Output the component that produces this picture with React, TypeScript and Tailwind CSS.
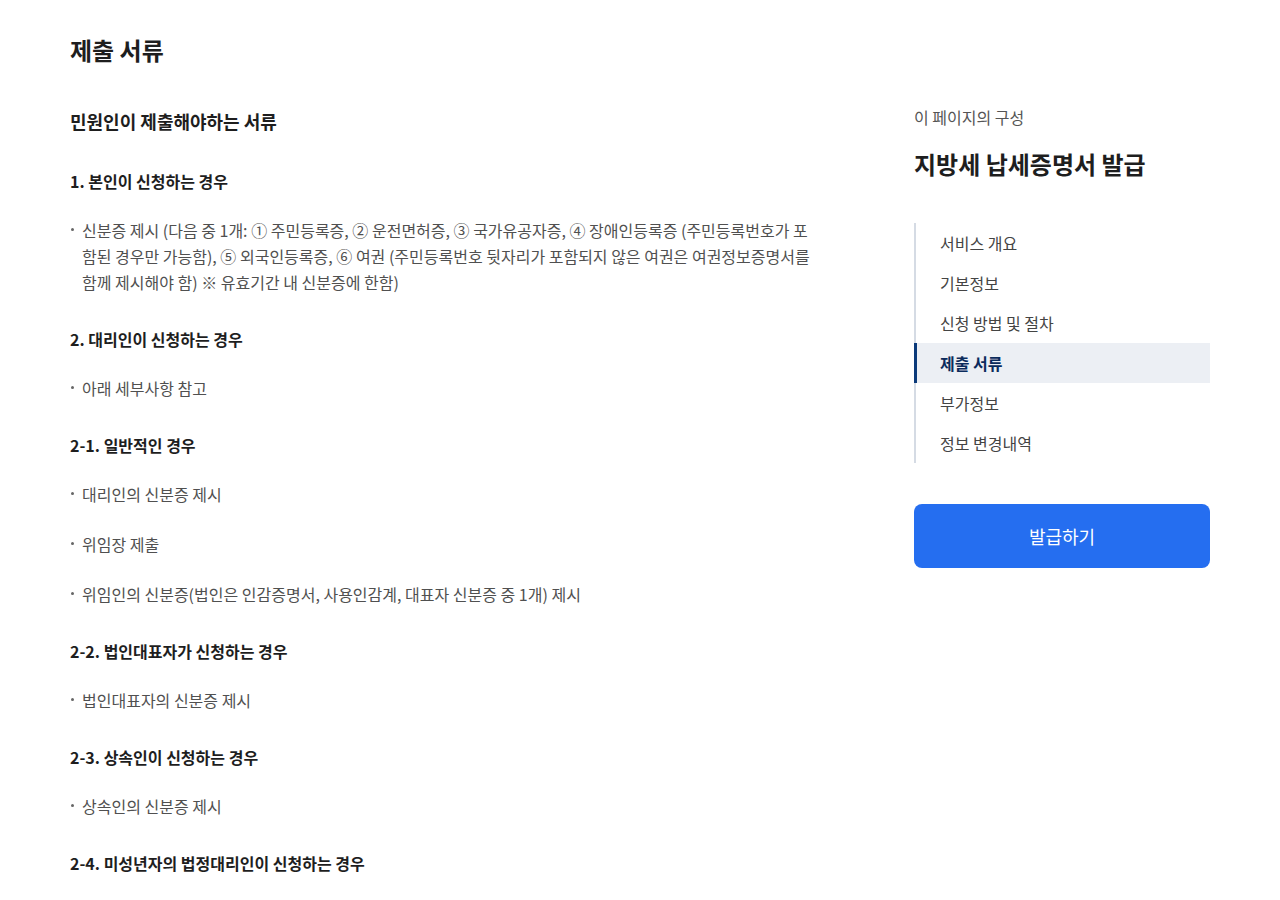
import React from 'react';

type Block =
  | { type: 'h4'; text: string }
  | { type: 'li'; text: string };

const blocks: Block[] = [
  { type: 'h4', text: '1. 본인이 신청하는 경우' },
  {
    type: 'li',
    text: '신분증 제시 (다음 중 1개: ① 주민등록증, ② 운전면허증, ③ 국가유공자증, ④ 장애인등록증 (주민등록번호가 포함된 경우만 가능함), ⑤ 외국인등록증, ⑥ 여권 (주민등록번호 뒷자리가 포함되지 않은 여권은 여권정보증명서를 함께 제시해야 함) ※ 유효기간 내 신분증에 한함)',
  },
  { type: 'h4', text: '2. 대리인이 신청하는 경우' },
  { type: 'li', text: '아래 세부사항 참고' },
  { type: 'h4', text: '2-1. 일반적인 경우' },
  { type: 'li', text: '대리인의 신분증 제시' },
  { type: 'li', text: '위임장 제출' },
  { type: 'li', text: '위임인의 신분증(법인은 인감증명서, 사용인감계, 대표자 신분증 중 1개) 제시' },
  { type: 'h4', text: '2-2. 법인대표자가 신청하는 경우' },
  { type: 'li', text: '법인대표자의 신분증 제시' },
  { type: 'h4', text: '2-3. 상속인이 신청하는 경우' },
  { type: 'li', text: '상속인의 신분증 제시' },
  { type: 'h4', text: '2-4. 미성년자의 법정대리인이 신청하는 경우' },
  { type: 'li', text: '법정대리인의 신분증 제시' },
];

const navItems = ['서비스 개요', '기본정보', '신청 방법 및 절차', '제출 서류', '부가정보', '정보 변경내역'];

export default function App() {
  return (
    <div
      className="min-h-screen bg-white text-[#1e1e1e]"
      style={{ fontFamily: '"Noto Sans CJK KR", "Noto Sans", sans-serif' }}
    >
      <div className="flex px-[70px] gap-[84px]">
        <main className="w-[760px] shrink-0">
          <h1 className="pt-[34px] text-[24px] leading-8 font-bold">제출 서류</h1>
          <h2 className="mt-[41px] text-[18px] leading-7 font-bold">민원인이 제출해야하는 서류</h2>
          <div className="mt-[34px]">
            {blocks.map((b, i) =>
              b.type === 'h4' ? (
                <h3 key={i} className="text-[16px] leading-6 font-bold mt-[32px] first:mt-0 mb-[24px]">
                  {b.text}
                </h3>
              ) : (
                <div key={i} className="flex items-start pl-[1px] mb-[24px] text-[16px] leading-[26px] text-[#505050]">
                  <span className="mt-[11px] mr-[8px] h-[3px] w-[3px] shrink-0 rounded-full bg-[#666]" />
                  <p className="pr-[10px]">{b.text}</p>
                </div>
              )
            )}
          </div>
        </main>

        <aside className="w-[296px] shrink-0 pt-[106px]">
          <p className="text-[16px] leading-[22px] text-[#555]">이 페이지의 구성</p>
          <h2 className="mt-[20px] text-[24px] leading-8 font-bold">지방세 납세증명서 발급</h2>
          <nav className="mt-[43px] border-l-2 border-[#d5dbe4]">
            <ul>
              {navItems.map((item) =>
                item === '제출 서류' ? (
                  <li
                    key={item}
                    className="-ml-[2px] flex h-10 items-center border-l-[3px] border-[#0b3a7a] bg-[#eceff4] pl-[23px] text-[16px] font-bold text-[#0b2b5c]"
                  >
                    {item}
                  </li>
                ) : (
                  <li key={item} className="flex h-10 items-center pl-[24px] text-[16px] text-[#444]">
                    {item}
                  </li>
                )
              )}
            </ul>
          </nav>
          <button className="mt-[41px] flex h-16 w-full items-center justify-center rounded-lg bg-[#256ef0] text-[18px] text-white">
            발급하기
          </button>
        </aside>
      </div>
    </div>
  );
}
